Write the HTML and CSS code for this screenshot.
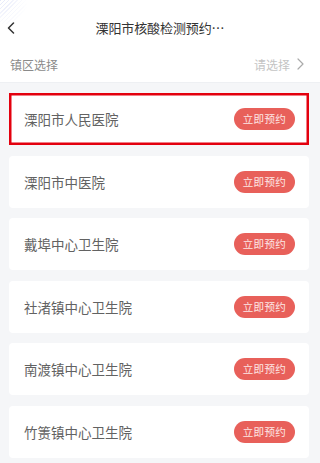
FILE: index.html
```html
<!DOCTYPE html>
<html lang="zh">
<head>
<meta charset="utf-8">
<link rel="stylesheet" href="styles.css">
</head>
<body>
<div class="page">
  <div class="deco"></div>
  <header class="header">
    <svg class="back" width="8" height="12" viewBox="0 0 8 12"><polyline points="6.5,1 1.5,6 6.5,11" fill="none" stroke="#333" stroke-width="1.5" stroke-linecap="round" stroke-linejoin="round"/></svg>
    <div class="title">溧阳市核酸检测预约…</div>
  </header>
  <div class="selector">
    <span class="sel-label">镇区选择</span>
    <span class="sel-value">请选择
      <svg class="chev" width="7" height="12" viewBox="0 0 7 12"><polyline points="1,1 6,6 1,11" fill="none" stroke="#aaa" stroke-width="1.2" stroke-linecap="round" stroke-linejoin="round"/></svg>
    </span>
  </div>
  <div class="list">
    <div class="card highlight"><span class="name">溧阳市人民医院</span><span class="btn">立即预约</span></div>
    <div class="card"><span class="name">溧阳市中医院</span><span class="btn">立即预约</span></div>
    <div class="card"><span class="name">戴埠中心卫生院</span><span class="btn">立即预约</span></div>
    <div class="card"><span class="name">社渚镇中心卫生院</span><span class="btn">立即预约</span></div>
    <div class="card"><span class="name">南渡镇中心卫生院</span><span class="btn">立即预约</span></div>
    <div class="card"><span class="name">竹箦镇中心卫生院</span><span class="btn">立即预约</span></div>
  </div>
</div>
</body>
</html>
```
FILE: styles.css
```css
html, body {
  margin: 0;
  padding: 0;
  background: #f5f6f8;
  font-family: "Noto Sans CJK SC", "Noto Sans", sans-serif;
}
.page {
  position: relative;
  width: 320px;
  height: 463px;
  overflow: hidden;
  background: #f5f6f8;
}
.deco {
  position: absolute;
  left: 0;
  top: 0;
  width: 34px;
  height: 24px;
  background: repeating-linear-gradient(135deg, rgba(185,195,240,0.4) 0 1px, transparent 1px 3px);
  -webkit-mask-image: radial-gradient(circle at 0 0, #000 0, rgba(0,0,0,0.5) 12px, transparent 28px);
  mask-image: radial-gradient(circle at 0 0, #000 0, rgba(0,0,0,0.5) 12px, transparent 28px);
  z-index: 2;
}
.header {
  position: relative;
  height: 36px;
  padding-top: 10px;
  background: #fff;
  display: flex;
  align-items: center;
  justify-content: center;
}
.back {
  position: absolute;
  left: 7px;
  top: 22px;
}
.title {
  font-size: 13px;
  color: #333;
  line-height: 36px;
  letter-spacing: -0.1px;
}
.selector {
  height: 36px;
  background: #fff;
  display: flex;
  align-items: center;
  justify-content: space-between;
  padding: 0 16px 0 10px;
  border-bottom: 1px solid #eef0f3;
}
.sel-label {
  font-size: 12px;
  color: #8a8a8a;
}
.sel-value {
  font-size: 12px;
  color: #c4c4c4;
  display: flex;
  align-items: center;
  gap: 7px;
}
.list {
  display: flex;
  flex-direction: column;
  gap: 10.6px;
  padding: 10px 11px 0 9px;
}
.card {
  height: 52px;
  background: #fff;
  border-radius: 4px;
  display: flex;
  align-items: center;
  justify-content: space-between;
  padding: 0 14px 0 15px;
}
.card.highlight {
  border-radius: 0;
  box-shadow: inset 0 0 0 2.5px #e3000e;
}
.name {
  font-size: 13.5px;
  color: #626262;
}
.btn {
  height: 22px;
  line-height: 22px;
  padding: 0 9px;
  border-radius: 11px;
  background: #e8605a;
  color: #fde8e6;
  font-size: 10.5px;
  letter-spacing: 0.3px;
}
```
